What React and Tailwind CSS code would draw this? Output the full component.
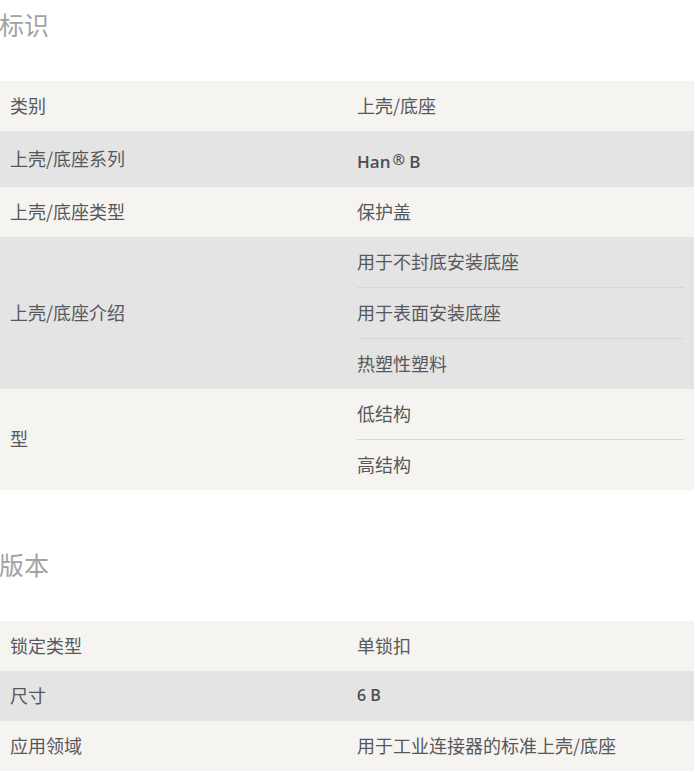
const IDENT = [
  { label: '类别', values: ['上壳/底座'] },
  { label: '上壳/底座系列', values: ['HAN'], bold: true },
  { label: '上壳/底座类型', values: ['保护盖'] },
  { label: '上壳/底座介绍', values: ['用于不封底安装底座', '用于表面安装底座', '热塑性塑料'] },
  { label: '型', values: ['低结构', '高结构'] },
];

const VERSION = [
  { label: '锁定类型', values: ['单锁扣'] },
  { label: '尺寸', values: ['6 B'], bold: true },
  { label: '应用领域', values: ['用于工业连接器的标准上壳/底座'] },
];

function Value({ text, bold }) {
  if (text === 'HAN') {
    return (
      <span className="font-['Open_Sans',sans-serif] text-[17px] font-semibold text-[#4d4d50]">
        Han<sup className="relative -top-[3px] ml-[2px] text-[15px] leading-none">®</sup> B
      </span>
    );
  }
  if (bold) {
    return (
      <span className="font-['Open_Sans',sans-serif] text-[16px] font-semibold text-[#4d4d50]">{text}</span>
    );
  }
  return <span>{text}</span>;
}

function SpecTable({ rows }) {
  return (
    <div className="w-[694px]">
      {rows.map((row, i) => (
        <div
          key={row.label}
          className={`grid grid-cols-2 ${i % 2 === 0 ? 'bg-[#f5f4f0]' : 'bg-[#e4e4e4]'}`}
        >
          <div className="flex items-center px-[10px] pb-[3px]">{row.label}</div>
          <div className="px-[10px]">
            {row.values.map((v, j) => (
              <div
                key={v}
                className={`flex items-center ${v === 'HAN' ? 'h-[56px] pt-[5px]' : 'h-[50px] pb-[3px]'} ${
                  j < row.values.length - 1 ? 'h-[51px] border-b border-[#d6d6d6]' : ''
                }`}
              >
                <Value text={v} bold={row.bold} />
              </div>
            ))}
          </div>
        </div>
      ))}
    </div>
  );
}

export default function App() {
  return (
    <div className="w-[695px] bg-white font-['Noto_Sans_CJK_SC','Noto_Sans',sans-serif] text-[18px] leading-6 text-[#58585c]">
      <h2 className="h-[49px] text-[25px] leading-[49px] font-normal text-[#a3a3a3] -ml-px">标识</h2>
      <div className="mt-[32px]">
        <SpecTable rows={IDENT} />
      </div>
      <h2 className="mt-[50px] h-[49px] text-[25px] leading-[49px] font-normal text-[#a3a3a3] -ml-px">版本</h2>
      <div className="mt-[32px]">
        <SpecTable rows={VERSION} />
      </div>
    </div>
  );
}
